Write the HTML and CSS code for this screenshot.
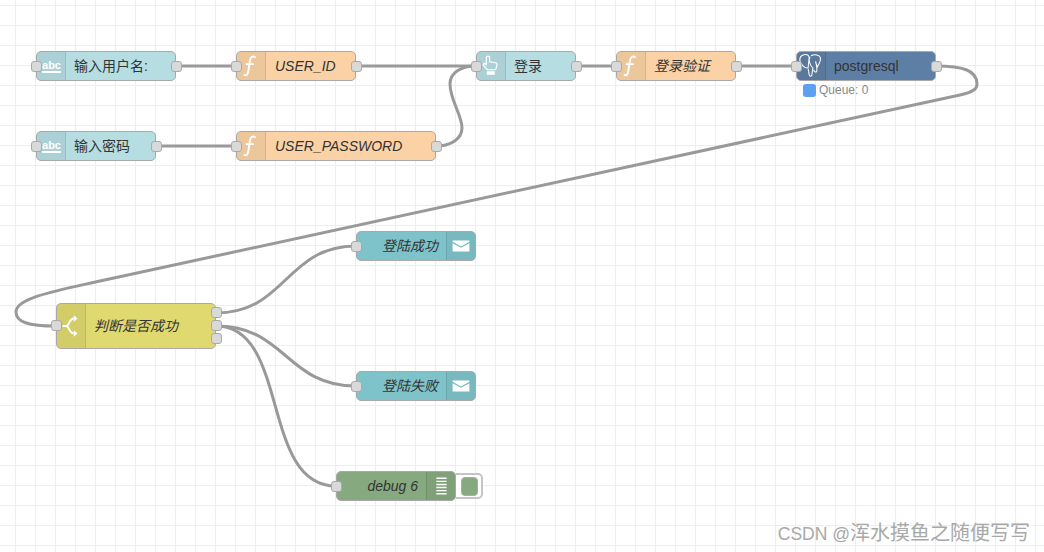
FILE: index.html
```html
<!DOCTYPE html>
<html lang="zh">
<head>
<meta charset="utf-8">
<title>Node-RED flow</title>
<link rel="stylesheet" href="styles.css">
</head>
<body>
<div class="canvas">
  <svg class="wires" width="1044" height="552" viewBox="0 0 1044 552" fill="none">
    <path d="M176 66H236"/>
    <path d="M356 66H476"/>
    <path d="M156 146H236"/>
    <path d="M436 146C452 146 462 138 462 128C462 115 450 100 450 84C450 72 462 66 476 66"/>
    <path d="M576 66H616"/>
    <path d="M736 66H796"/>
    <path d="M936 66C962 66 977 70 977 84C977 88 975 91.800 960 95L100 281C55 291 16 298 16 312C16 322 28 326 56 326"/>
    <path d="M216 313C286 313 286 246 356 246"/>
    <path d="M216 326C286 326 286 386 356 386"/>
    <path d="M216 326C290 326 260 486 336 486"/>
  </svg>

  <div class="node inject n-user">
    <span class="port in"></span>
    <div class="icon"><span class="abc">abc</span></div>
    <div class="label">输入用户名:</div>
    <span class="port out"></span>
  </div>
  <div class="node func n-id">
    <span class="port in"></span>
    <div class="icon"><svg width="30" height="28" viewBox="0 0 30 28" fill="none"><path class="stroke" d="M20 5C17 2.500 14.500 4 14 8L12 20C11.500 24 9 25 7.500 23M9.500 12H18"/></svg></div>
    <div class="label em lat">USER_ID</div>
    <span class="port out"></span>
  </div>
  <div class="node inject n-login">
    <span class="port in"></span>
    <div class="icon"><svg width="30" height="28" viewBox="0 0 30 28" fill="none"><path class="hand" d="M11 18L6.500 12.500L7.500 11L10 12.500V5C10 3 13.500 3 13.500 5V9.500L20 10.500C21 10.500 21.500 11.500 21.500 12.500L20 18Z"/><path class="hand-fill" d="M10.500 19.500H19V23.500H10.500Z"/></svg></div>
    <div class="label">登录</div>
    <span class="port out"></span>
  </div>
  <div class="node func n-check">
    <span class="port in"></span>
    <div class="icon"><svg width="30" height="28" viewBox="0 0 30 28" fill="none"><path class="stroke" d="M20 5C17 2.500 14.500 4 14 8L12 20C11.500 24 9 25 7.500 23M9.500 12H18"/></svg></div>
    <div class="label em">登录验证</div>
    <span class="port out"></span>
  </div>
  <div class="node pg n-pg">
    <span class="port in"></span>
    <div class="icon"><svg width="30" height="28" viewBox="0 0 30 28" fill="none"><path class="thin" d="M5 3C9 1 12 2 13 4C13 8 12 12 12 16C8 17 4 12 3 8C3 6 3 4 5 3ZM15 3C19 1 24 2 25 5C26 9 23 12 22 15C21 13 20 12 20 9M14 4C12 8 14 14 17 16L16 23C16 26 13 25 13 23L12 17M20 9C21 14 22 17 21 20C20 21 18 20 18 18"/></svg></div>
    <div class="label">postgresql</div>
    <span class="port out"></span>
    <div class="status"><i class="dot"></i><span>Queue: 0</span></div>
  </div>

  <div class="node inject n-pass">
    <span class="port in"></span>
    <div class="icon"><span class="abc">abc</span></div>
    <div class="label">输入密码</div>
    <span class="port out"></span>
  </div>
  <div class="node func n-pw">
    <span class="port in"></span>
    <div class="icon"><svg width="30" height="28" viewBox="0 0 30 28" fill="none"><path class="stroke" d="M20 5C17 2.500 14.500 4 14 8L12 20C11.500 24 9 25 7.500 23M9.500 12H18"/></svg></div>
    <div class="label em lat">USER_PASSWORD</div>
    <span class="port out"></span>
  </div>

  <div class="node switch n-switch">
    <span class="port in"></span>
    <div class="icon"><svg width="30" height="44" viewBox="0 0 30 44" fill="none"><path class="stroke" d="M6 22H10C13 22 13 14 18 14M10 22C13 22 13 30 18 30"/><path class="solid" d="M18 10.500L22 14L18 17.500ZM18 26.500L22 30L18 33.500Z"/></svg></div>
    <div class="label em">判断是否成功</div>
    <span class="port o1"></span>
    <span class="port o2"></span>
    <span class="port o3"></span>
  </div>

  <div class="node mail right n-ok">
    <span class="port in"></span>
    <div class="label em">登陆成功</div>
    <div class="icon"><svg width="30" height="28" viewBox="0 0 30 28"><path class="solid" d="M6 8H24V9.500L15 14.500L6 9.500ZM6 11L15 16L24 11V20H6Z"/></svg></div>
  </div>
  <div class="node mail right n-fail">
    <span class="port in"></span>
    <div class="label em">登陆失败</div>
    <div class="icon"><svg width="30" height="28" viewBox="0 0 30 28"><path class="solid" d="M6 8H24V9.500L15 14.500L6 9.500ZM6 11L15 16L24 11V20H6Z"/></svg></div>
  </div>

  <div class="debug-wrap n-debug">
    <div class="node dbg right">
      <span class="port in"></span>
      <div class="label em">debug 6</div>
      <div class="icon"><svg width="30" height="28" viewBox="0 0 30 28"><path class="solid" d="M10 5H21V6.500H10ZM10 8.300H21V9.800H10ZM10 11.600H21V13.100H10ZM10 14.900H21V16.400H10ZM10 18.200H21V19.700H10ZM10 21.500H21V23H10Z"/></svg></div>
    </div>
    <div class="toggle"><i></i></div>
  </div>

  <div class="watermark"><span class="wm-latin">CSDN @</span>浑水摸鱼之随便写写</div>
</div>
</body>
</html>
```

FILE: styles.css
```css
* { box-sizing: border-box; }
html, body { margin: 0; padding: 0; background: #fff; }
.canvas {
  position: relative;
  width: 1044px;
  height: 552px;
  overflow: hidden;
  background-color: #fff;
  background-image:
    linear-gradient(to right, #eee 1px, transparent 1px),
    linear-gradient(to bottom, #eee 1px, transparent 1px);
  background-size: 20px 20px;
  background-position: 15px 5px;
  font-family: "Liberation Sans", "Noto Sans CJK SC", sans-serif;
  font-size: 14px;
  color: #333;
}
.wires { position: absolute; left: 0; top: 0; }
.wires path { stroke: #999; stroke-width: 3; }

.node {
  position: absolute;
  display: flex;
  height: 30px;
  border: 1px solid #a8a8a8;
  border-radius: 5px;
  align-items: stretch;
}
.icon {
  flex: 0 0 29px;
  display: flex;
  align-items: center;
  justify-content: center;
  background: rgba(0, 0, 0, 0.05);
  border-right: 1px solid rgba(0, 0, 0, 0.1);
  border-radius: 4px 0 0 4px;
  overflow: hidden;
}
.label {
  flex: 1;
  padding: 0 8px;
  line-height: 29px;
  white-space: nowrap;
}
.em { font-style: italic; }
.lat { padding-left: 9px; }
.right .label { text-align: right; }
.right .icon {
  border-right: 0;
  border-left: 1px solid rgba(0, 0, 0, 0.1);
  border-radius: 0 4px 4px 0;
}

.inject { background: #b5dde2; }
.func { background: #fad2a5; }
.pg { background: #5e7fa5; }
.switch { background: #dfd96f; height: 46px; }
.switch .label { line-height: 44px; }
.mail { background: #7fc3ca; }
.dbg { background: #87a980; }

.port {
  position: absolute;
  width: 11px;
  height: 11px;
  background: #d9d9d9;
  border: 1px solid #aaa;
  border-radius: 3px;
}
.in { left: -6px; top: 9px; }
.out { right: -7px; top: 9px; }
.switch .in { top: 16px; }
.o1 { right: -7px; top: 3px; }
.o2 { right: -7px; top: 16px; }
.o3 { right: -7px; top: 29px; }

.n-user { left: 36px; top: 51px; width: 140px; }
.n-id { left: 236px; top: 51px; width: 120px; }
.n-login { left: 476px; top: 51px; width: 100px; }
.n-check { left: 616px; top: 51px; width: 120px; }
.n-pg { left: 796px; top: 51px; width: 140px; }
.n-pass { left: 36px; top: 131px; width: 120px; }
.n-pw { left: 236px; top: 131px; width: 200px; }
.n-switch { left: 56px; top: 303px; width: 160px; }
.n-ok { left: 356px; top: 231px; width: 120px; }
.n-fail { left: 356px; top: 371px; width: 120px; }

.debug-wrap { position: absolute; display: flex; align-items: center; left: 336px; top: 471px; width: 147px; height: 30px; }
.debug-wrap .dbg { position: relative; flex: 0 0 120px; }
.toggle {
  flex: 1;
  height: 26px;
  background: #fff;
  border: 2px solid #c4c4c4;
  border-left: 0;
  border-radius: 0 5px 5px 0;
  display: flex;
  align-items: center;
  justify-content: flex-end;
  padding-right: 3px;
}
.toggle i {
  display: block;
  width: 17px;
  height: 19px;
  background: #87a980;
  border: 1px solid #aaa;
  border-radius: 4px;
}

.abc {
  color: #fff;
  font-size: 11px;
  font-weight: bold;
  line-height: 11px;
  border-bottom: 2px solid #fff;
  margin-left: 1px;
}
.stroke { stroke: #fff; stroke-width: 2; }
.hand { stroke: #fff; stroke-width: 1.3; }
.hand-fill { fill: #fff; }
.thin { stroke: #fff; stroke-width: 1.1; }
.solid { fill: #fff; }

.status {
  position: absolute;
  left: 6px;
  top: 31px;
  display: flex;
  align-items: center;
  gap: 3px;
  font-size: 12px;
  line-height: 14px;
  color: #888;
}
.dot {
  display: block;
  width: 13px;
  height: 13px;
  background: #5e9ff2;
  border-radius: 3px;
}

.watermark {
  position: absolute;
  right: 14px;
  top: 520px;
  font-size: 20px;
  line-height: 26px;
  color: #a8a8a8;
  white-space: nowrap;
}
.wm-latin { font-size: 17.5px; }
```
